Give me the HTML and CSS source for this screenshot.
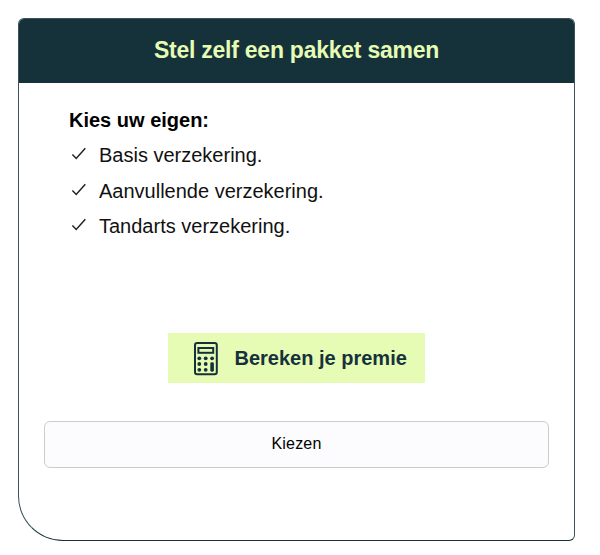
FILE: index.html
```html
<!DOCTYPE html>
<html lang="nl">
<head>
<meta charset="utf-8">
<title>Stel zelf een pakket samen</title>
<link rel="stylesheet" href="styles.css">
</head>
<body>
<article class="card">
  <header class="card-header"><h2>Stel zelf een pakket samen</h2></header>
  <div class="card-body">
    <h3>Kies uw eigen:</h3>
    <ul class="options">
      <li><svg class="check" viewBox="0 0 16 16"><path d="M1.4 8.5 5.2 12.4 14.3 2.2"/></svg>Basis verzekering.</li>
      <li><svg class="check" viewBox="0 0 16 16"><path d="M1.4 8.5 5.2 12.4 14.3 2.2"/></svg>Aanvullende verzekering.</li>
      <li><svg class="check" viewBox="0 0 16 16"><path d="M1.4 8.5 5.2 12.4 14.3 2.2"/></svg>Tandarts verzekering.</li>
    </ul>
  </div>
  <a class="calculate">
    <svg class="calculator" viewBox="0 0 24 34">
      <rect class="line" x="1" y="1.1" width="21.8" height="31.2" rx="2.2"/>
      <rect class="line" x="4.4" y="6" width="14.8" height="4.8"/>
      <circle cx="5.3" cy="16.3" r="1.9"/><circle cx="11.7" cy="16.3" r="1.9"/><circle cx="18.1" cy="16.3" r="1.9"/>
      <circle cx="5.3" cy="22" r="1.9"/><circle cx="11.7" cy="22" r="1.9"/>
      <circle cx="5.3" cy="27.8" r="1.9"/><circle cx="11.7" cy="27.8" r="1.9"/>
      <rect x="16.3" y="20.3" width="3.6" height="9.4" rx="1.4"/>
    </svg>
    <span>Bereken je premie</span>
  </a>
  <button class="choose">Kiezen</button>
</article>
</body>
</html>
```
FILE: styles.css
```css
* { box-sizing: border-box; }
body { margin: 0; padding: 18px; background: #fff; font-family: "Liberation Sans", Arial, sans-serif; color: #000; }
.card { width: 557px; height: 523px; display: flex; flex-direction: column; border: 1px solid #3a525b; border-bottom-color: #15323b; border-radius: 6px 6px 6px 45px; overflow: hidden; }
.card-header { height: 64px; padding-bottom: 2px; display: flex; align-items: center; justify-content: center; background: #15323b; color: #e6fcb4; }
h2 { margin: 0; font-size: 23px; line-height: 28px; letter-spacing: -.24px; }
.card-body { height: 250px; padding: 23px 50px 0; }
h3 { margin: 0; font-size: 20px; line-height: 28px; }
.options { list-style: none; margin: 4px 0 0; padding: 0; font-size: 20px; line-height: 35.5px; color: #111; }
.options li { display: flex; align-items: center; }
.check { width: 16px; height: 16px; margin: -3px 12px 0 2px; fill: none; stroke: #222; stroke-width: 1.5; }
.calculate { width: 257px; height: 50px; margin-left: 149px; padding-left: 26px; display: flex; align-items: center; gap: 16.5px; background: #e6fcb4; color: #15323b; font-size: 20px; font-weight: 700; white-space: nowrap; }
.calculator { width: 24px; height: 34px; margin-top: 2px; fill: #15323b; }
.line { fill: none; stroke: #15323b; stroke-width: 2; }
.choose { width: 505px; height: 47px; margin: 38px 0 0 25px; padding: 0 0 2px; border: 1px solid #ccc; border-radius: 6px; background: #fcfcff; color: #000; font: 16px "Liberation Sans", Arial, sans-serif; letter-spacing: .2px; }
```
